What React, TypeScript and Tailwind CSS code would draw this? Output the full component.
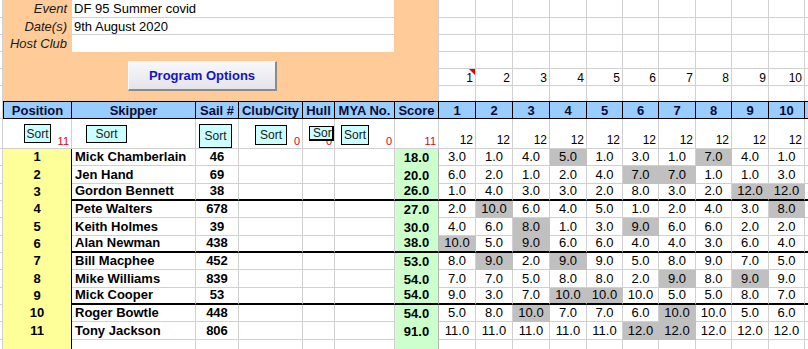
import React from 'react';

const GRID = 'border-r border-b border-[#d0d0d0]';
const GRID_R = 'border-r border-[#d0d0d0]';

const RACES = [
  'w-[37px]', 'w-[37px]', 'w-[37px]', 'w-[37px]', 'w-[36px]',
  'w-[36px]', 'w-[37px]', 'w-[36px]', 'w-[37px]', 'w-[36px]',
];

const TOP_H = ['h-[18px]', 'h-[17px]', 'h-[17px]', 'h-[17px]', 'h-[17px]', 'h-[15px]'];

const ROW_H = [
  'h-[17px]', 'h-[18px]', 'h-[17px]', 'h-[17px]', 'h-[18px]', 'h-[17px]',
  'h-[17px]', 'h-[18px]', 'h-[17px]', 'h-[17px]', 'h-[18px]',
];

// name, sail, score, race places (* = discarded)
const RESULTS: [string, string, string, string][] = [
  ['Mick Chamberlain', '46', '18.0', '3 1 4 5* 1 3 1 7* 4 1'],
  ['Jen Hand', '69', '20.0', '6 2 1 2 4 7* 7* 1 1 3'],
  ['Gordon Bennett', '38', '26.0', '1 4 3 3 2 8 3 2 12* 12*'],
  ['Pete Walters', '678', '27.0', '2 10* 6 4 5 1 2 4 3 8*'],
  ['Keith Holmes', '39', '30.0', '4 6 8* 1 3 9* 6 6 2 2'],
  ['Alan Newman', '438', '38.0', '10* 5 9* 6 6 4 4 3 6 4'],
  ['Bill Macphee', '452', '53.0', '8 9* 2 9* 9 5 8 9 7 5'],
  ['Mike Williams', '839', '54.0', '7 7 5 8 8 2 9* 8 9* 9'],
  ['Mick Cooper', '53', '54.0', '9 3 7 10* 10* 10 5 5 8 7'],
  ['Roger Bowtle', '448', '54.0', '5 8 10* 7 7 6 10* 10 5 6'],
  ['Tony Jackson', '806', '91.0', '11 11 11 11 11 12* 12* 12 12 12'],
];

const HEADERS: [string, string][] = [
  ['Position', 'w-[69px] border-l'],
  ['Skipper', 'w-[124px]'],
  ['Sail #', 'w-[43px]'],
  ['Club/City', 'w-[64px]'],
  ['Hull', 'w-[32px]'],
  ['MYA No.', 'w-[60px]'],
  ['Score', 'w-[44px]'],
];

const EVENT_ROWS: [string, string, string][] = [
  ['Event', 'DF 95 Summer covid', 'h-[18px] border-b'],
  ['Date(s)', '9th August 2020', 'h-[17px] border-b'],
  ['Host Club', '', 'h-[17px]'],
];

const SortButton: React.FC<{ className: string }> = ({ className }) => (
  <div className={`flex shrink-0 items-center justify-center border border-black bg-[#ccffff] text-[12px] leading-[14px] text-[#1a1a1a] ${className}`}>
    Sort
  </div>
);

const Count: React.FC<{ value: string }> = ({ value }) => (
  <span className="ml-auto self-end pr-[2px] text-[11px] leading-[13px] text-[#dd0022]">{value}</span>
);

export default function App() {
  return (
    <div className="h-[349px] w-[808px] overflow-hidden bg-white font-['Liberation_Sans',Arial,sans-serif] text-[13px] text-black">
      {/* event panel + race number row */}
      <div className="flex h-[101px] w-max">
        <div className="flex w-[3px] flex-col">
          {TOP_H.map((h, i) => (
            <div key={i} className={`${h} ${i < 5 ? GRID : GRID_R}`} />
          ))}
        </div>
        <div className="flex w-[436px] flex-col border-r border-[#d0d0d0] bg-[#ffcc99]">
          {EVENT_ROWS.map(([label, value, cls]) => (
            <div key={label} className="flex">
              <div className="w-[69px] pr-[5px] text-right italic leading-[17px] text-[#1a1a1a]">{label}</div>
              <div className={`w-[322px] border-[#d0d0d0] bg-white pl-[2px] leading-[17px] ${cls}`}>{value}</div>
            </div>
          ))}
          <button className="ml-[125px] mt-[9px] h-[30px] w-[149px] border-t border-l border-r-2 border-b-2 border-t-[#fafafa] border-l-[#fafafa] border-r-[#8a8a8a] border-b-[#8a8a8a] bg-linear-to-b from-[#f8f8fa] to-[#e4e4ea] text-[13px] font-bold text-[#1414c4]">
            Program Options
          </button>
        </div>
        <div className="flex flex-col">
          {TOP_H.map((h, r) => (
            <div key={r} className={`flex ${h}`}>
              {RACES.map((w, c) => (
                <div
                  key={c}
                  className={`relative flex items-end justify-end pr-[2px] text-[12px] leading-[14px] ${w} ${r < 5 ? GRID : GRID_R}`}
                >
                  {r === 4 && c + 1}
                  {r === 4 && c === 0 && (
                    <span className="absolute right-0 top-0 h-0 w-0 border-l-[6px] border-t-[6px] border-l-transparent border-t-[#e00000]" />
                  )}
                </div>
              ))}
              <div className={`w-[20px] ${r < 5 ? GRID : GRID_R}`} />
            </div>
          ))}
        </div>
      </div>

      {/* column headers */}
      <div className="flex h-[18px] w-max">
        <div className={`w-[3px] ${GRID}`} />
        {HEADERS.map(([label, cls]) => (
          <div
            key={label}
            className={`flex justify-center border-t border-r border-b border-black bg-[#99ccff] pt-px font-bold leading-[15px] text-[#0c0c36] ${cls}`}
          >
            {label}
          </div>
        ))}
        {RACES.map((w, c) => (
          <div
            key={c}
            className={`flex justify-center border-t border-r border-b border-black bg-[#99ccff] pt-px font-bold leading-[15px] text-[#0c0c36] ${w}`}
          >
            {c + 1}
          </div>
        ))}
        <div className="w-[20px] border-t border-b border-black bg-[#99ccff]" />
      </div>

      {/* sort row */}
      <div className="flex h-[30px] w-max">
        <div className={`w-[3px] ${GRID}`} />
        <div className={`flex w-[69px] ${GRID}`}>
          <SortButton className="ml-[21px] mt-[5px] h-[19px] w-[27px]" />
          <Count value="11" />
        </div>
        <div className={`flex w-[124px] ${GRID}`}>
          <SortButton className="ml-[14px] mt-[6px] h-[18px] w-[41px]" />
        </div>
        <div className={`flex w-[43px] ${GRID}`}>
          <SortButton className="ml-[3px] mt-[5px] h-[24px] w-[33px]" />
        </div>
        <div className={`flex w-[64px] ${GRID}`}>
          <SortButton className="ml-[16px] mt-[6px] h-[20px] w-[32px]" />
          <Count value="0" />
        </div>
        <div className={`relative flex w-[32px] ${GRID}`}>
          <Count value="0" />
          <div className="absolute left-[6px] top-[7px] h-[15px] w-[25px] overflow-hidden whitespace-nowrap border-t border-l border-r-2 border-b-2 border-black bg-[#ccffff] pl-[3px] text-[12px] leading-[12px] text-[#1a1a1a]">
            Sort
          </div>
        </div>
        <div className={`flex w-[60px] ${GRID}`}>
          <SortButton className="ml-[6px] mt-[6px] h-[20px] w-[28px]" />
          <Count value="0" />
        </div>
        <div className={`flex w-[44px] ${GRID}`}>
          <Count value="11" />
        </div>
        {RACES.map((w, c) => (
          <div key={c} className={`flex items-end justify-end pb-px pr-[2px] text-[12px] leading-[14px] ${w} ${GRID}`}>
            12
          </div>
        ))}
        <div className={`w-[20px] ${GRID}`} />
      </div>

      {/* results */}
      {RESULTS.map(([name, sail, score, races], i) => {
        const thick = i === 2 || i === 5 || i === 8;
        const bb = thick ? 'border-b-2 border-b-black' : 'border-b border-b-[#d0d0d0]';
        const white = `border-r border-r-[#d0d0d0] ${bb}`;
        return (
          <div key={name} className={`flex w-max leading-[16px] ${ROW_H[i]}`}>
            <div className={`w-[3px] ${GRID}`} />
            <div className="flex w-[69px] items-end justify-center border-r border-black bg-[#ffff99] pb-px font-bold">
              {i + 1}
            </div>
            <div className={`flex w-[124px] items-end pl-[3px] font-bold ${white}`}>{name}</div>
            <div className={`flex w-[43px] items-end justify-center font-bold ${white}`}>{sail}</div>
            <div className={`w-[64px] ${white}`} />
            <div className={`w-[32px] ${white}`} />
            <div className={`w-[60px] ${white}`} />
            <div
              className={`flex w-[44px] items-end justify-center border-r border-r-[#b4b4b4] bg-[#ccffcc] font-bold ${thick ? 'border-b-2 border-b-black' : ''}`}
            >
              {score}
            </div>
            {races.split(' ').map((r, c) => {
              const discard = r.endsWith('*');
              const place = parseInt(r, 10);
              const bottom = thick
                ? 'border-b-2 border-b-black'
                : discard
                  ? 'border-b border-b-transparent'
                  : 'border-b border-b-[#d0d0d0]';
              return (
                <div
                  key={c}
                  className={`flex items-end justify-center border-r ${RACES[c]} ${bottom} ${discard ? 'border-r-transparent bg-[#c0c0c0]' : 'border-r-[#d0d0d0] bg-white'}`}
                >
                  {place.toFixed(1)}
                </div>
              );
            })}
            <div className={`w-[20px] ${white}`} />
          </div>
        );
      })}

      {/* empty row */}
      <div className="flex h-[17px] w-max">
        <div className={`w-[3px] ${GRID}`} />
        <div className="w-[69px] border-r border-black bg-[#ffff99]" />
        <div className={`w-[124px] ${GRID}`} />
        <div className={`w-[43px] ${GRID}`} />
        <div className={`w-[64px] ${GRID}`} />
        <div className={`w-[32px] ${GRID}`} />
        <div className={`w-[60px] ${GRID}`} />
        <div className="w-[44px] border-r border-[#b4b4b4] bg-[#ccffcc]" />
        {RACES.map((w, c) => (
          <div key={c} className={`${w} ${GRID}`} />
        ))}
        <div className={`w-[20px] ${GRID}`} />
      </div>
    </div>
  );
}
